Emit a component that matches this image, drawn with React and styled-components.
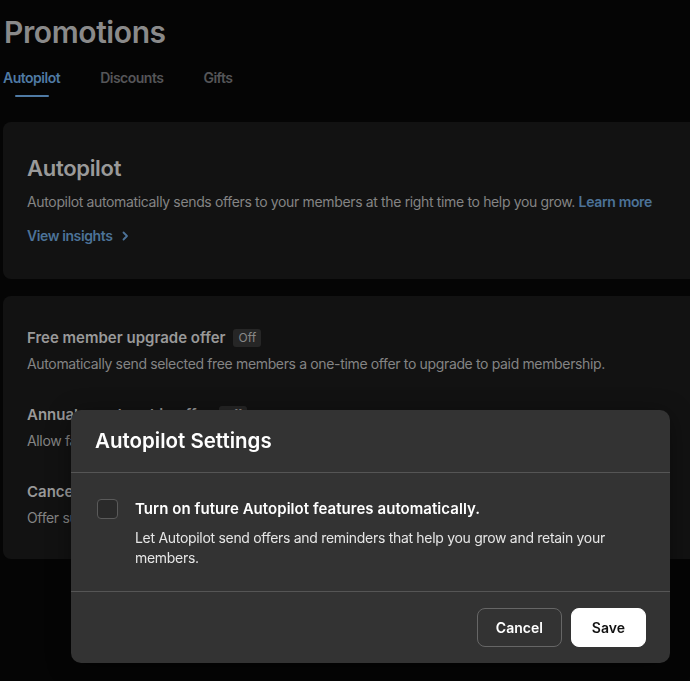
import React from "react";
import styled, { createGlobalStyle } from "styled-components";

const Global = createGlobalStyle`
  html, body { margin: 0; padding: 0; background: #050505; overflow: hidden; }
  body { font-family: Inter, "Noto Sans", sans-serif; -webkit-font-smoothing: antialiased; }
  * { box-sizing: border-box; }
`;

const Page = styled.div`
  width: 700px;
  min-height: 681px;
  padding: 10px 0 0 3px;
  background: #050505;
`;

const Title = styled.h1`
  margin: 0 0 0 1px;
  font-size: 30px;
  line-height: 44px;
  font-weight: 600;
  letter-spacing: -0.4px;
  color: #8a8a8a;
`;

const Tabs = styled.div`
  display: flex;
  gap: 40px;
  margin-top: 14px;
  margin-bottom: 25px;
`;

const Tab = styled.div`
  position: relative;
  font-size: 14px;
  line-height: 20px;
  font-weight: 600;
  letter-spacing: -0.5px;
  padding-bottom: 9px;
  color: ${p => (p.$active ? "#4f7aa4" : "#555558")};
  &::after {
    content: "";
    display: ${p => (p.$active ? "block" : "none")};
    position: absolute;
    left: 50%;
    transform: translateX(-50%);
    bottom: 0;
    width: 34px;
    height: 2px;
    background: #4f7aa4;
    border-radius: 1px;
  }
`;

const Card = styled.section`
  background: #121212;
  border-radius: 8px;
  padding: ${p => p.$pad || "31px 24px 33px"};
  margin-bottom: 17px;
`;

const CardTitle = styled.h2`
  margin: 0;
  font-size: 22px;
  line-height: 30px;
  font-weight: 600;
  letter-spacing: -0.3px;
  color: #9a9a9a;
`;

const Text = styled.p`
  margin: ${p => p.$m || "0"};
  font-size: 14px;
  line-height: 20px;
  letter-spacing: -0.35px;
  color: #848484;
`;

const Link = styled.a`
  color: #4c7298;
  font-weight: 600;
  text-decoration: none;
`;

const Insights = styled.div`
  display: flex;
  align-items: center;
  gap: 8px;
  margin-top: 14px;
  font-size: 14px;
  line-height: 20px;
  font-weight: 600;
  letter-spacing: -0.4px;
  color: #4c7298;
`;

const Row = styled.div`
  display: flex;
  flex-direction: column;
  gap: 6px;
  & + & { margin-top: 31px; }
`;

const RowHead = styled.div`
  display: flex;
  align-items: center;
  gap: 8px;
  font-size: 15px;
  line-height: 20px;
  font-weight: 600;
  color: #999;
`;

const Badge = styled.span`
  font-size: 12px;
  line-height: 18px;
  font-weight: 400;
  padding: 0 5px;
  border-radius: 3px;
  background: #262626;
  color: #888;
`;

const Modal = styled.div`
  position: fixed;
  left: 71px;
  top: 410px;
  width: 599px;
  background: #333333;
  border-radius: 10px;
  box-shadow: 0 4px 24px rgba(0, 0, 0, 0.4);
  color: #fff;
`;

const ModalHeader = styled.div`
  height: 63px;
  display: flex;
  align-items: center;
  padding: 0 24px;
  border-bottom: 1px solid #555;
`;

const ModalTitle = styled.h3`
  margin: 0;
  font-size: 20.5px;
  line-height: 28px;
  font-weight: 600;
  letter-spacing: 0;
  color: #fff;
`;

const ModalBody = styled.div`
  display: flex;
  gap: 17px;
  padding: 25px 24px 23px 26px;
  border-bottom: 1px solid #555;
`;

const Checkbox = styled.input.attrs({ type: "checkbox" })`
  appearance: none;
  flex: none;
  width: 21px;
  height: 20px;
  margin: 1px 0 0 0;
  border: 1px solid #5a5a5a;
  border-radius: 4px;
  background: #2a2a2a;
`;

const Label = styled.div`
  font-size: 15px;
  line-height: 22px;
  font-weight: 600;
  letter-spacing: 0.05px;
  color: #fff;
`;

const Desc = styled.div`
  margin-top: 8px;
  font-size: 14px;
  line-height: 20px;
  letter-spacing: -0.3px;
  color: #e6e6e6;
`;

const Footer = styled.div`
  display: flex;
  justify-content: flex-end;
  gap: 9px;
  padding: 16px 24px 16px;
`;

const Button = styled.button`
  height: 39px;
  padding: 0 ${p => (p.$primary ? "20px" : "18px")};
  border-radius: 8px;
  font-family: inherit;
  font-size: 14px;
  font-weight: 600;
  cursor: pointer;
  border: 1px solid ${p => (p.$primary ? "#fff" : "#666")};
  background: ${p => (p.$primary ? "#fff" : "transparent")};
  color: ${p => (p.$primary ? "#111" : "#fff")};
`;

const Chevron = () => (
  <svg width="10" height="10" viewBox="0 0 10 10" fill="none">
    <path d="M3.5 1.5 L7 5 L3.5 8.5" stroke="#4c7298" strokeWidth="1.8" strokeLinecap="round" strokeLinejoin="round" />
  </svg>
);

const rows = [
  ["Free member upgrade offer", "Automatically send selected free members a one-time offer to upgrade to paid membership."],
  ["Annual membership offer", "Allow fans on monthly memberships to switch to annual membership at a discount."],
  ["Cancellation offer", "Offer subscribers a discount when they try to cancel their membership."],
];

export default function App() {
  return (
    <Page>
      <Global />
      <Title>Promotions</Title>
      <Tabs>
        <Tab $active>Autopilot</Tab>
        <Tab>Discounts</Tab>
        <Tab>Gifts</Tab>
      </Tabs>
      <Card>
        <CardTitle>Autopilot</CardTitle>
        <Text $m="9px 0 0">
          Autopilot automatically sends offers to your members at the right time to help you grow. <Link>Learn more</Link>
        </Text>
        <Insights>
          View insights <Chevron />
        </Insights>
      </Card>
      <Card $pad="32px 24px 31px">
        {rows.map(([t, d]) => (
          <Row key={t}>
            <RowHead>
              {t} <Badge>Off</Badge>
            </RowHead>
            <Text>{d}</Text>
          </Row>
        ))}
      </Card>
      <Modal>
        <ModalHeader>
          <ModalTitle>Autopilot Settings</ModalTitle>
        </ModalHeader>
        <ModalBody>
          <Checkbox />
          <div>
            <Label>Turn on future Autopilot features automatically.</Label>
            <Desc>Let Autopilot send offers and reminders that help you grow and retain your members.</Desc>
          </div>
        </ModalBody>
        <Footer>
          <Button>Cancel</Button>
          <Button $primary>Save</Button>
        </Footer>
      </Modal>
    </Page>
  );
}
